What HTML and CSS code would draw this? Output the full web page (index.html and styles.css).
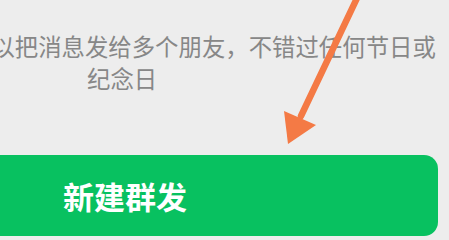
FILE: index.html
```html
<!DOCTYPE html>
<html lang="zh-CN">
<head>
  <meta charset="UTF-8" />
  <meta name="viewport" content="width=device-width, initial-scale=1.0" />
  <title>群发助手</title>
  <link rel="stylesheet" href="styles.css">
</head>
<body>
  <div class="page">
    <div class="desc">
      <div class="desc-line first">可以把消息发给多个朋友，不错过任何节日或</div>
      <div class="desc-line second">纪念日</div>
    </div>

    <button class="new-btn">新建群发</button>

    <!-- annotation arrow drawn over the screenshot -->
    <svg class="arrow" width="449" height="240" viewBox="0 0 449 240">
      <line x1="358" y1="-4" x2="301" y2="116" stroke="#f47a45" stroke-width="6.5" stroke-linecap="round" />
      <polygon points="284,111 316,125 288,144" fill="#f47a45" />
    </svg>
  </div>
</body>
</html>
```

FILE: styles.css
```css
body {
  margin: 0;
  background: #ededed;
  font-family: "Noto Sans CJK SC", "Noto Sans", sans-serif;
  overflow: hidden;
}
.page {
  position: relative;
  width: 449px;
  height: 240px;
  overflow: hidden;
}
.desc {
  padding-top: 30px;
  color: #878787;
  font-size: 23.4px;
  line-height: 32px;
  white-space: nowrap;
}
.desc-line.first {
  margin-left: -32px;
}
.desc-line.second {
  padding-left: 87px;
}
.new-btn {
  display: block;
  margin: 61px 11px 0 -20px;
  width: 458px;
  height: 81px;
  padding: 0 0 0 83px;
  border: none;
  border-radius: 14px;
  background: #08c160;
  color: #ffffff;
  font-family: inherit;
  font-size: 31px;
  font-weight: bold;
  text-align: left;
}
.arrow {
  position: absolute;
  left: 0;
  top: 0;
}
```
